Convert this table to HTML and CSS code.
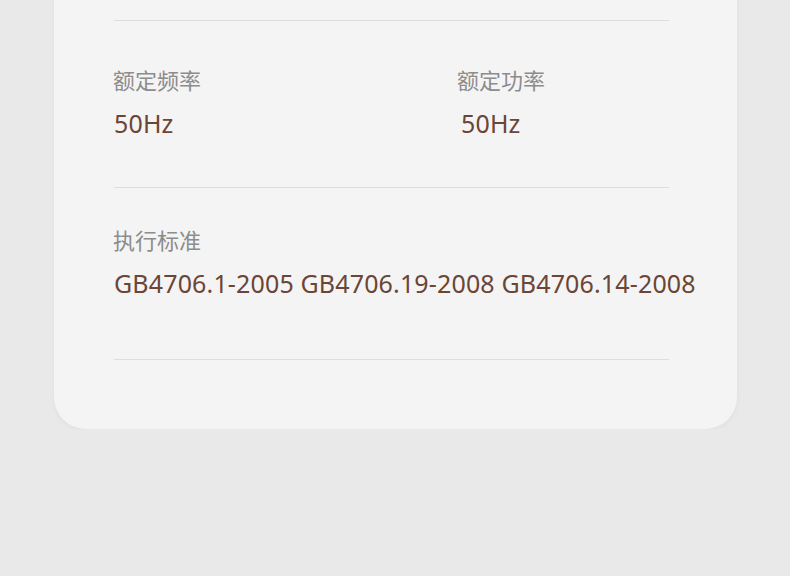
FILE: index.html
```html
<!DOCTYPE html>
<html lang="zh">
<head>
<meta charset="utf-8">
<link rel="stylesheet" href="styles.css">
</head>
<body>
<div class="card">
  <div class="divider"></div>
  <div class="section row">
    <div class="col col-left">
      <div class="label">额定频率</div>
      <div class="value">50Hz</div>
    </div>
    <div class="col">
      <div class="label">额定功率</div>
      <div class="value value-shift">50Hz</div>
    </div>
  </div>
  <div class="divider"></div>
  <div class="section section-2">
    <div class="label">执行标准</div>
    <div class="value nowrap">GB4706.1-2005 GB4706.19-2008 GB4706.14-2008</div>
  </div>
  <div class="divider"></div>
</div>
</body>
</html>
```

FILE: styles.css
```css
html, body {
  margin: 0;
  padding: 0;
  background: #e9e9e9;
  font-family: "Noto Sans", "Noto Sans CJK SC", sans-serif;
}
.card {
  margin: -20px 53px 0 54px;
  width: 683px;
  box-sizing: border-box;
  padding: 40px 68px 69px 60px;
  background: #f4f4f4;
  border-radius: 0 0 32px 32px;
  box-shadow: 0 2px 6px rgba(0, 0, 0, 0.04);
}
.divider {
  height: 1px;
  background: #dedede;
}
.section {
  padding: 45px 0 47px;
}
.section-2 {
  padding: 38px 0 59px;
}
.row {
  display: flex;
}
.col-left {
  flex: 0 0 344px;
}
.label {
  margin-left: -1px;
  font-size: 22px;
  line-height: 28px;
  color: #8c8c8c;
}
.value {
  margin-top: 12px;
  font-size: 25px;
  line-height: 34px;
  letter-spacing: 0.15px;
  color: #6b4535;
}
.value-shift {
  padding-left: 3px;
}
.nowrap {
  white-space: nowrap;
}
```
